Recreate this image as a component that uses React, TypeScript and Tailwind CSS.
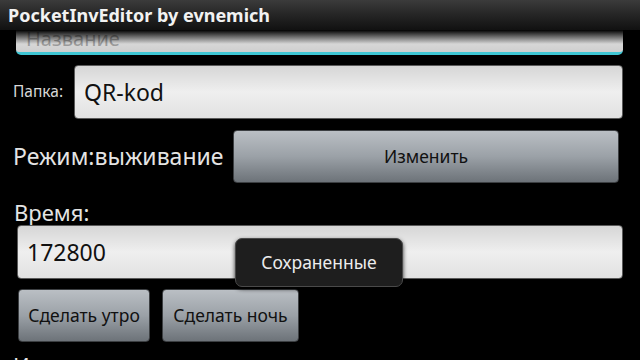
import React from "react";

const font = { fontFamily: '"Noto Sans", "Open Sans", "DejaVu Sans", sans-serif' };

function Field({ value, className = "" }: { value: string; className?: string }) {
  return (
    <div
      className={`flex h-[54px] items-center rounded-[4px] border border-[#5a5a5a] bg-gradient-to-b from-[#d6d6d6] via-[#efefef] to-[#e2e2e2] px-[9px] text-[23px] leading-none text-[#111] ${className}`}
    >
      {value}
    </div>
  );
}

function GrayButton({ label, className = "" }: { label: string; className?: string }) {
  return (
    <div
      className={`flex h-[53px] items-center justify-center rounded-[4px] border border-[#3c3f42] bg-gradient-to-b from-[#babfc4] via-[#9ba1a7] to-[#6d7379] text-[17.5px] leading-none whitespace-nowrap text-[#111] ${className}`}
    >
      {label}
    </div>
  );
}

export default function App() {
  return (
    <div className="flex h-[360px] w-[640px] flex-col overflow-hidden bg-black" style={font}>
      {/* title bar */}
      <div className="flex h-[30px] shrink-0 items-center bg-gradient-to-b from-[#3b3b3b] to-[#111] pl-[8px] text-[18px] leading-none font-bold text-[#f2f2f2]">
        PocketInvEditor by evnemich
      </div>

      {/* scroll view */}
      <div className="relative flex-1 overflow-hidden">
        <div className="-mt-[29px] flex flex-col pl-[13px] pr-[17px]">
          {/* focused field, mostly scrolled away */}
          <div className="ml-[3px] flex h-[54px] items-end rounded-[5px] border-b-[3px] border-[#3fc6d4] bg-gradient-to-b from-[#8a8a8a] via-[#e6e6e6] to-[#cfcfcf] px-[10px] pb-[3px] text-[20px] leading-none text-[#9a9a9a]">
            Название
          </div>

          <div className="mt-[10px] flex items-center">
            <span className="w-[61px] shrink-0 text-[15.5px] leading-none text-[#d8d8d8]">Папка:</span>
            <Field value="QR-kod" className="flex-1" />
          </div>

          <div className="mt-[11px] flex items-center">
            <span className="w-[220px] shrink-0 text-[23px] leading-none whitespace-nowrap text-[#e4e4e4]">Режим:выживание</span>
            <GrayButton label="Изменить" className="mr-[4px] flex-1" />
          </div>

          <div className="mt-[16px] h-[26px] pl-[1px] text-[22px] leading-[26px] text-[#e4e4e4]">Время:</div>
          <Field value="172800" className="ml-[4px]" />

          <div className="mt-[10px] flex gap-[12px] pl-[5px]">
            <GrayButton label="Сделать утро" className="w-[132px]" />
            <GrayButton label="Сделать ночь" className="w-[137px]" />
          </div>

          <div className="mt-[10px] text-[22px] leading-[26px] text-[#e4e4e4]">Инвентарь:</div>
        </div>

        {/* top fading edge */}
        <div className="pointer-events-none absolute left-0 right-0 top-0 h-[14px] bg-gradient-to-b from-black to-transparent" />

        {/* toast */}
        <div className="absolute left-[235px] top-[208px] flex h-[49px] w-[168px] items-center justify-center rounded-[7px] border border-[#4a4a4a] bg-[#1e1e1e] text-[17.5px] leading-none text-[#ececec] shadow-[0_2px_4px_rgba(0,0,0,0.8)]">
          Сохраненные
        </div>
      </div>
    </div>
  );
}
